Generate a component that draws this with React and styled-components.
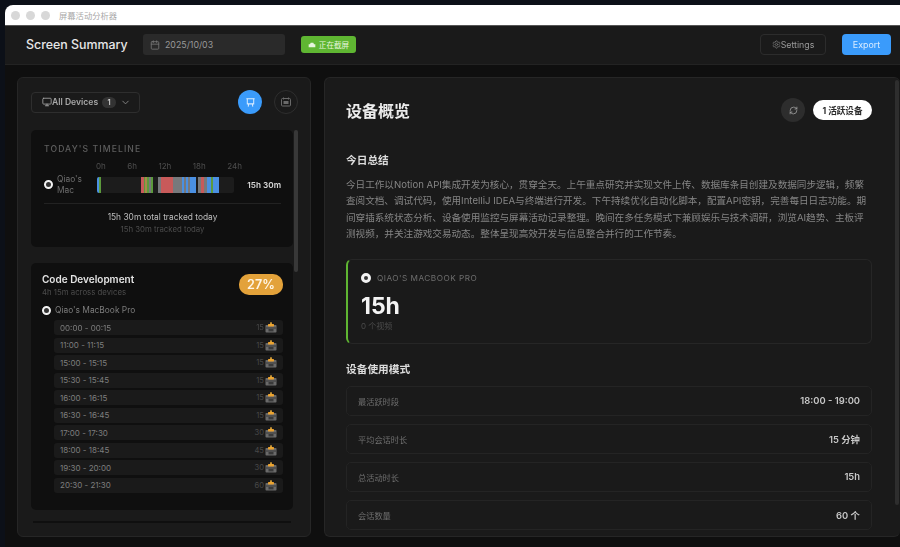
import React from 'react'
import styled, {createGlobalStyle} from 'styled-components'
import {Calendar, ChevronDown, Monitor, RefreshCw, Settings} from 'lucide-react'

const GlobalStyle = createGlobalStyle`
  html, body {
    margin: 0;
    height: 547px;
    overflow: hidden;
    background: #0c1018;
    font-family: Inter, "Noto Sans CJK SC", sans-serif;
  }
  * { box-sizing: border-box; }
`

const Window = styled.div`
  margin: 5px 0 0 5px;
  height: 542px;
  display: flex;
  flex-direction: column;
  border-top-left-radius: 8px;
  overflow: hidden;
  background: #0f0f0f;
  filter: blur(0.4px);
`
const TitleBar = styled.div`
  height: 21px;
  flex: none;
  display: flex;
  align-items: center;
  padding-left: 6px;
  background: #fff;
  border-bottom: 1px solid #555;
`
const Light = styled.span`
  width: 9px;
  height: 9px;
  margin-right: 6px;
  border-radius: 50%;
  background: #d8d8d8;
`
const TitleText = styled.span`
  margin-left: 3px;
  font-size: 8.3px;
  color: #a8a8a8;
`
const Header = styled.header`
  height: 39px;
  flex: none;
  display: flex;
  align-items: center;
  padding: 0 9px 1px 21px;
  background: #1a1a1a;
  border-bottom: 1px solid #232323;
`
const Brand = styled.h1`
  margin: 0;
  width: 117px;
  font-size: 12.4px;
  font-weight: 500;
  color: #e8e8e8;
`
const DateBox = styled.div`
  width: 142px;
  height: 21px;
  display: flex;
  align-items: center;
  gap: 5px;
  padding-left: 7px;
  border-radius: 3px;
  background: #2a2a2a;
  font-size: 8.8px;
  color: #999;
`
const LiveBadge = styled.div`
  height: 17px;
  width: 55px;
  margin-left: 16px;
  display: flex;
  align-items: center;
  justify-content: center;
  gap: 3px;
  border-radius: 3px;
  background: #5fb632;
  font-size: 7.6px;
  color: #e6f5dc;
`
const HeaderActions = styled.div`
  margin-left: auto;
  display: flex;
  gap: 16px;
`
const SettingsButton = styled.div`
  width: 66px;
  height: 21px;
  display: flex;
  align-items: center;
  justify-content: center;
  border: 1px solid #2c2c2c;
  border-radius: 4px;
  font-size: 8.8px;
  color: #9a9a9a;
`
const ExportButton = styled.div`
  width: 49px;
  height: 21px;
  display: flex;
  align-items: center;
  justify-content: center;
  border-radius: 4px;
  background: #3a9bfb;
  font-size: 8.9px;
  color: #d9ecff;
`
const Main = styled.main`
  flex: 1;
  display: flex;
  gap: 13px;
  padding: 12px 0 10px 12px;
  min-height: 0;
`
const Panel = styled.section`
  position: relative;
  overflow: hidden;
  background: #1a1a1a;
  border: 1px solid #262626;
  border-radius: 6px;
`
const LeftPanel = styled(Panel)`
  width: 294px;
  flex: none;
  padding: 12px 18px 0 13px;
`
const RightPanel = styled(Panel)`
  flex: 1;
  border-right: none;
  padding: 20px 28px 0 21px;
`
const ScrollThumb = styled.div`
  position: absolute;
  width: 4px;
  border-radius: 2px;
  background: ${props => props.$color};
  top: ${props => props.$top}px;
  right: ${props => props.$right}px;
  height: ${props => props.$height}px;
`
const Toolbar = styled.div`
  height: 24px;
  display: flex;
  align-items: center;
  justify-content: space-between;
  margin-bottom: 16px;
`
const DeviceSelect = styled.div`
  width: 109px;
  height: 21px;
  display: flex;
  align-items: center;
  padding-left: 10px;
  border: 1px solid #2e2e2e;
  border-radius: 4px;
  font-size: 8.6px;
  font-weight: 600;
  color: #a8a8a8;
`
const CountChip = styled.span`
  margin: 0 4px 0 4px;
  width: 14px;
  height: 11px;
  display: flex;
  align-items: center;
  justify-content: center;
  border-radius: 6px;
  background: #333;
  font-size: 7.5px;
  color: #ccc;
`
const RoundTools = styled.div`
  display: flex;
  gap: 12px;
  margin-right: -6px;
`
const RoundTool = styled.div`
  width: 24px;
  height: 24px;
  display: flex;
  align-items: center;
  justify-content: center;
  border-radius: 50%;
  background: ${props => (props.$active ? '#3a9bfb' : 'transparent')};
  border: ${props => (props.$active ? 'none' : '1px solid #2e2e2e')};
  color: ${props => (props.$active ? '#d9ecff' : '#6a6a6a')};
`
const Card = styled.div`
  background: #0f0f0f;
  border-radius: 5px;
  width: 262px;
`
const TimelineCard = styled(Card)`
  height: 117px;
  padding: 14px 12px 0 13px;
  margin-bottom: 16px;
`
const CardCaption = styled.div`
  font-size: 8.6px;
  font-weight: 500;
  letter-spacing: 1.1px;
  color: #5e5e5e;
`
const HourRow = styled.div`
  margin: 7px 0 0 52px;
  width: 146px;
  display: flex;
  justify-content: space-between;
  font-size: 8px;
  color: #4e4e4e;
`
const TrackRow = styled.div`
  margin-top: 3px;
  display: flex;
  align-items: center;
  padding-bottom: 8px;
  border-bottom: 1px solid #222;
`
const Dot = styled.span`
  width: 9px;
  height: 9px;
  flex: none;
  border-radius: 50%;
  border: 2.6px solid #f2f2f2;
  background: #333;
`
const TrackName = styled.div`
  width: 40px;
  margin-left: 4px;
  font-size: 8.4px;
  line-height: 10.5px;
  color: #6e6e6e;
`
const Bar = styled.div`
  width: 137px;
  height: 16px;
  display: flex;
  overflow: hidden;
  border-radius: 2px;
  background: #1c1c1c;
`
const Segment = styled.span`
  height: 100%;
  flex: none;
  width: ${props => props.$w}px;
  background: ${props => props.$c};
`
const TrackTotal = styled.div`
  margin-left: auto;
  font-size: 8.2px;
  font-weight: 600;
  color: #d8d8d8;
`
const TotalLine = styled.div`
  margin-top: 8px;
  text-align: center;
  font-size: 8.4px;
  color: #bdbdbd;
`
const TotalSub = styled.div`
  margin-top: 2px;
  text-align: center;
  font-size: 7.8px;
  color: #4c4c4c;
`
const CategoryCard = styled(Card)`
  height: 247px;
  padding: 10px 10px 0 11px;
  margin-bottom: 11px;
`
const CategoryHead = styled.div`
  display: flex;
  justify-content: space-between;
  align-items: flex-start;
`
const CategoryName = styled.div`
  margin-top: 0;
  font-size: 10px;
  font-weight: 600;
  color: #e4e4e4;
`
const CategorySub = styled.div`
  margin-top: 2px;
  font-size: 7.8px;
  color: #4c4c4c;
`
const Percent = styled.div`
  width: 44px;
  height: 21px;
  margin-top: 1px;
  display: flex;
  align-items: center;
  justify-content: center;
  border-radius: 10px;
  background: #e3a23a;
  font-size: 12.6px;
  font-weight: 600;
  color: #fff6e6;
`
const DeviceLine = styled.div`
  margin-top: 8px;
  display: flex;
  align-items: center;
  gap: 4px;
  font-size: 8.4px;
  color: #7c7c7c;
`
const Sessions = styled.div`
  margin: 5px 0 0 12px;
  display: grid;
  grid-auto-rows: 15px;
  row-gap: 2.5px;
`
const SessionRow = styled.div`
  display: flex;
  align-items: center;
  padding: 0 6px;
  border-radius: 3px;
  background: #1a1a1a;
  font-size: 8px;
  color: #7e7e7e;
`
const SessionMinutes = styled.span`
  margin-left: auto;
  margin-right: 1px;
  font-size: 7.6px;
  color: #484848;
`
const NextCardEdge = styled.div`
  width: 258px;
  height: 2px;
  margin-left: 2px;
  background: #0f0f0f;
`
const OverviewHead = styled.div`
  height: 24px;
  display: flex;
  align-items: center;
`
const OverviewTitle = styled.h2`
  margin: 0;
  font-size: 16px;
  font-weight: 700;
  color: #ececec;
`
const RefreshButton = styled.div`
  margin-left: auto;
  width: 24px;
  height: 24px;
  display: flex;
  align-items: center;
  justify-content: center;
  border-radius: 50%;
  background: #2d2d2d;
  color: #aaa;
`
const ActivePill = styled.div`
  margin-left: 8px;
  width: 59px;
  height: 20px;
  display: flex;
  align-items: center;
  justify-content: center;
  border-radius: 10px;
  background: #fff;
  font-size: 8.6px;
  font-weight: 700;
  color: #2a2a2a;
`
const SectionTitle = styled.h3`
  margin: ${props => props.$top}px 0 0;
  font-size: 10.7px;
  line-height: 14px;
  font-weight: 600;
  color: #dcdcdc;
`
const Summary = styled.p`
  margin: 9px 0 0;
  width: 526px;
  font-size: 9.6px;
  line-height: 16.4px;
  color: #858585;
`
const DeviceCard = styled.div`
  margin-top: 16px;
  width: 526px;
  height: 85px;
  padding: 13px 14px 0 13px;
  border: 1px solid #262626;
  border-left: 2.5px solid #5fb632;
  border-radius: 6px;
`
const DeviceCardName = styled.div`
  display: flex;
  align-items: center;
  gap: 6px;
  font-size: 8.2px;
  letter-spacing: 0.5px;
  color: #6e6e6e;
`
const DeviceCardDot = styled(Dot)`
  width: 10px;
  height: 10px;
  border-width: 3px;
`
const BigHours = styled.div`
  margin-top: 9px;
  font-size: 23px;
  line-height: 28px;
  font-weight: 700;
  color: #f4f4f4;
`
const VideoCount = styled.div`
  margin-top: 0;
  font-size: 8px;
  color: #4c4c4c;
`
const Stats = styled.div`
  margin-top: 9px;
  width: 526px;
  display: grid;
  grid-auto-rows: 30px;
  row-gap: 8px;
`
const StatRow = styled.div`
  display: flex;
  align-items: center;
  justify-content: space-between;
  padding: 0 11px;
  border: 1px solid #242424;
  border-radius: 5px;
`
const StatLabel = styled.span`
  font-size: 8.2px;
  color: #6e6e6e;
`
const StatValue = styled.span`
  font-size: 9.4px;
  font-weight: 600;
  color: #c8c8c8;
`

const BOARD = (
  <svg width="11" height="11" viewBox="0 0 24 24" fill="none" stroke="currentColor" strokeWidth="2.2">
    <path d="M3 4h18" />
    <path d="M5 4v11h14V4" />
    <path d="M8 15l-1 6M16 15l1 6" />
  </svg>
)
const TRAY = (
  <svg width="12" height="12" viewBox="0 0 24 24" fill="none" stroke="currentColor" strokeWidth="2">
    <rect x="3" y="5" width="18" height="15" rx="2" />
    <path d="M7 3v4M17 3v4" />
    <rect x="7" y="10" width="10" height="6" fill="currentColor" stroke="none" />
  </svg>
)
const SHOT = (
  <svg width="8" height="8" viewBox="0 0 24 24" fill="#e6f5dc">
    <path d="M8 5h8l2 5h4v9H2v-9h4z" />
  </svg>
)
const BOX = (
  <svg width="12" height="11" viewBox="0 0 12 11">
    <rect x="0.5" y="3" width="11" height="7.5" rx="0.8" fill="#6a6a6a" />
    <path d="M1 6h10" stroke="#2c2c2c" strokeWidth="0.8" />
    <rect x="3.5" y="7" width="5" height="2.4" fill="#3a3a3a" />
    <rect x="3" y="2" width="6" height="2.4" rx="0.6" fill="#eba22f" />
    <rect x="5.2" y="0.3" width="1.6" height="2.4" fill="#f1b23e" />
  </svg>
)

const BLUE = '#4a90e2'
const GREEN = '#5c9a3c'
const RED = '#c85a5a'
const GRAY = '#77797c'
const SEGMENTS = [
  [BLUE, 2], [GREEN, 1.5], ['transparent', 40], [RED, 3], [GREEN, 1.5], ['#a88a4a', 1.5], [GREEN, 2.5],
  [GRAY, 2], [GREEN, 1.5], ['transparent', 5], [GRAY, 3.5], [RED, 12], [GRAY, 8.5], [BLUE, 2], [GRAY, 2],
  [BLUE, 2.5], [GRAY, 2], [BLUE, 5.5], ['transparent', 2], [GRAY, 3], [RED, 3.5], [GRAY, 3], [BLUE, 3.5],
  [GREEN, 2.5], [BLUE, 6],
]
const SESSIONS = [
  ['00:00 - 00:15', 15], ['11:00 - 11:15', 15], ['15:00 - 15:15', 15], ['15:30 - 15:45', 15], ['16:00 - 16:15', 15],
  ['16:30 - 16:45', 15], ['17:00 - 17:30', 30], ['18:00 - 18:45', 45], ['19:30 - 20:00', 30], ['20:30 - 21:30', 60],
]
const STATS = [
  ['最活跃时段', '18:00 - 19:00'], ['平均会话时长', '15 分钟'], ['总活动时长', '15h'], ['会话数量', '60 个'],
]

const App = () => (
  <>
    <GlobalStyle />
    <Window>
      <TitleBar>
        <Light />
        <Light />
        <Light />
        <TitleText>屏幕活动分析器</TitleText>
      </TitleBar>
      <Header>
        <Brand>Screen Summary</Brand>
        <DateBox>
          <Calendar size={10} color="#777" />
          2025/10/03
        </DateBox>
        <LiveBadge>
          {SHOT}
          正在截屏
        </LiveBadge>
        <HeaderActions>
          <SettingsButton>
            <Settings size={9} color="#777" />
            Settings
          </SettingsButton>
          <ExportButton>Export</ExportButton>
        </HeaderActions>
      </Header>
      <Main>
        <LeftPanel>
          <Toolbar>
            <DeviceSelect>
              <Monitor size={10} />
              All Devices
              <CountChip>1</CountChip>
              <ChevronDown size={11} color="#888" />
            </DeviceSelect>
            <RoundTools>
              <RoundTool $active>{BOARD}</RoundTool>
              <RoundTool>{TRAY}</RoundTool>
            </RoundTools>
          </Toolbar>
          <TimelineCard>
            <CardCaption>TODAY'S TIMELINE</CardCaption>
            <HourRow>
              <span>0h</span>
              <span>6h</span>
              <span>12h</span>
              <span>18h</span>
              <span>24h</span>
            </HourRow>
            <TrackRow>
              <Dot />
              <TrackName>
                Qiao's
                <br />
                Mac
              </TrackName>
              <Bar>
                {SEGMENTS.map(([c, w], i) => (
                  <Segment key={i} $c={c} $w={w} />
                ))}
              </Bar>
              <TrackTotal>15h 30m</TrackTotal>
            </TrackRow>
            <TotalLine>15h 30m total tracked today</TotalLine>
            <TotalSub>15h 30m tracked today</TotalSub>
          </TimelineCard>
          <CategoryCard>
            <CategoryHead>
              <div>
                <CategoryName>Code Development</CategoryName>
                <CategorySub>4h 15m across devices</CategorySub>
              </div>
              <Percent>27%</Percent>
            </CategoryHead>
            <DeviceLine>
              <Dot />
              Qiao's MacBook Pro
            </DeviceLine>
            <Sessions>
              {SESSIONS.map(([range, minutes]) => (
                <SessionRow key={range}>
                  {range}
                  <SessionMinutes>{minutes}</SessionMinutes>
                  {BOX}
                </SessionRow>
              ))}
            </Sessions>
          </CategoryCard>
          <NextCardEdge />
          <ScrollThumb $color="#383838" $top={52} $right={12} $height={142} />
        </LeftPanel>
        <RightPanel>
          <OverviewHead>
            <OverviewTitle>设备概览</OverviewTitle>
            <RefreshButton>
              <RefreshCw size={9} />
            </RefreshButton>
            <ActivePill>1 活跃设备</ActivePill>
          </OverviewHead>
          <SectionTitle $top={32}>今日总结</SectionTitle>
          <Summary>
            今日工作以Notion API集成开发为核心，贯穿全天。上午重点研究并实现文件上传、数据库条目创建及数据同步逻辑，频繁查阅文档、调试代码，使用IntelliJ IDEA与终端进行开发。下午持续优化自动化脚本，配置API密钥，完善每日日志功能。期间穿插系统状态分析、设备使用监控与屏幕活动记录整理。晚间在多任务模式下兼顾娱乐与技术调研，浏览AI趋势、主板评测视频，并关注游戏交易动态。整体呈现高效开发与信息整合并行的工作节奏。
          </Summary>
          <DeviceCard>
            <DeviceCardName>
              <DeviceCardDot />
              QIAO'S MACBOOK PRO
            </DeviceCardName>
            <BigHours>15h</BigHours>
            <VideoCount>0 个视频</VideoCount>
          </DeviceCard>
          <SectionTitle $top={19}>设备使用模式</SectionTitle>
          <Stats>
            {STATS.map(([label, value]) => (
              <StatRow key={label}>
                <StatLabel>{label}</StatLabel>
                <StatValue>{value}</StatValue>
              </StatRow>
            ))}
          </Stats>
          <ScrollThumb $color="#2e2e2e" $top={2} $right={1} $height={425} />
        </RightPanel>
      </Main>
    </Window>
  </>
)

export default App
